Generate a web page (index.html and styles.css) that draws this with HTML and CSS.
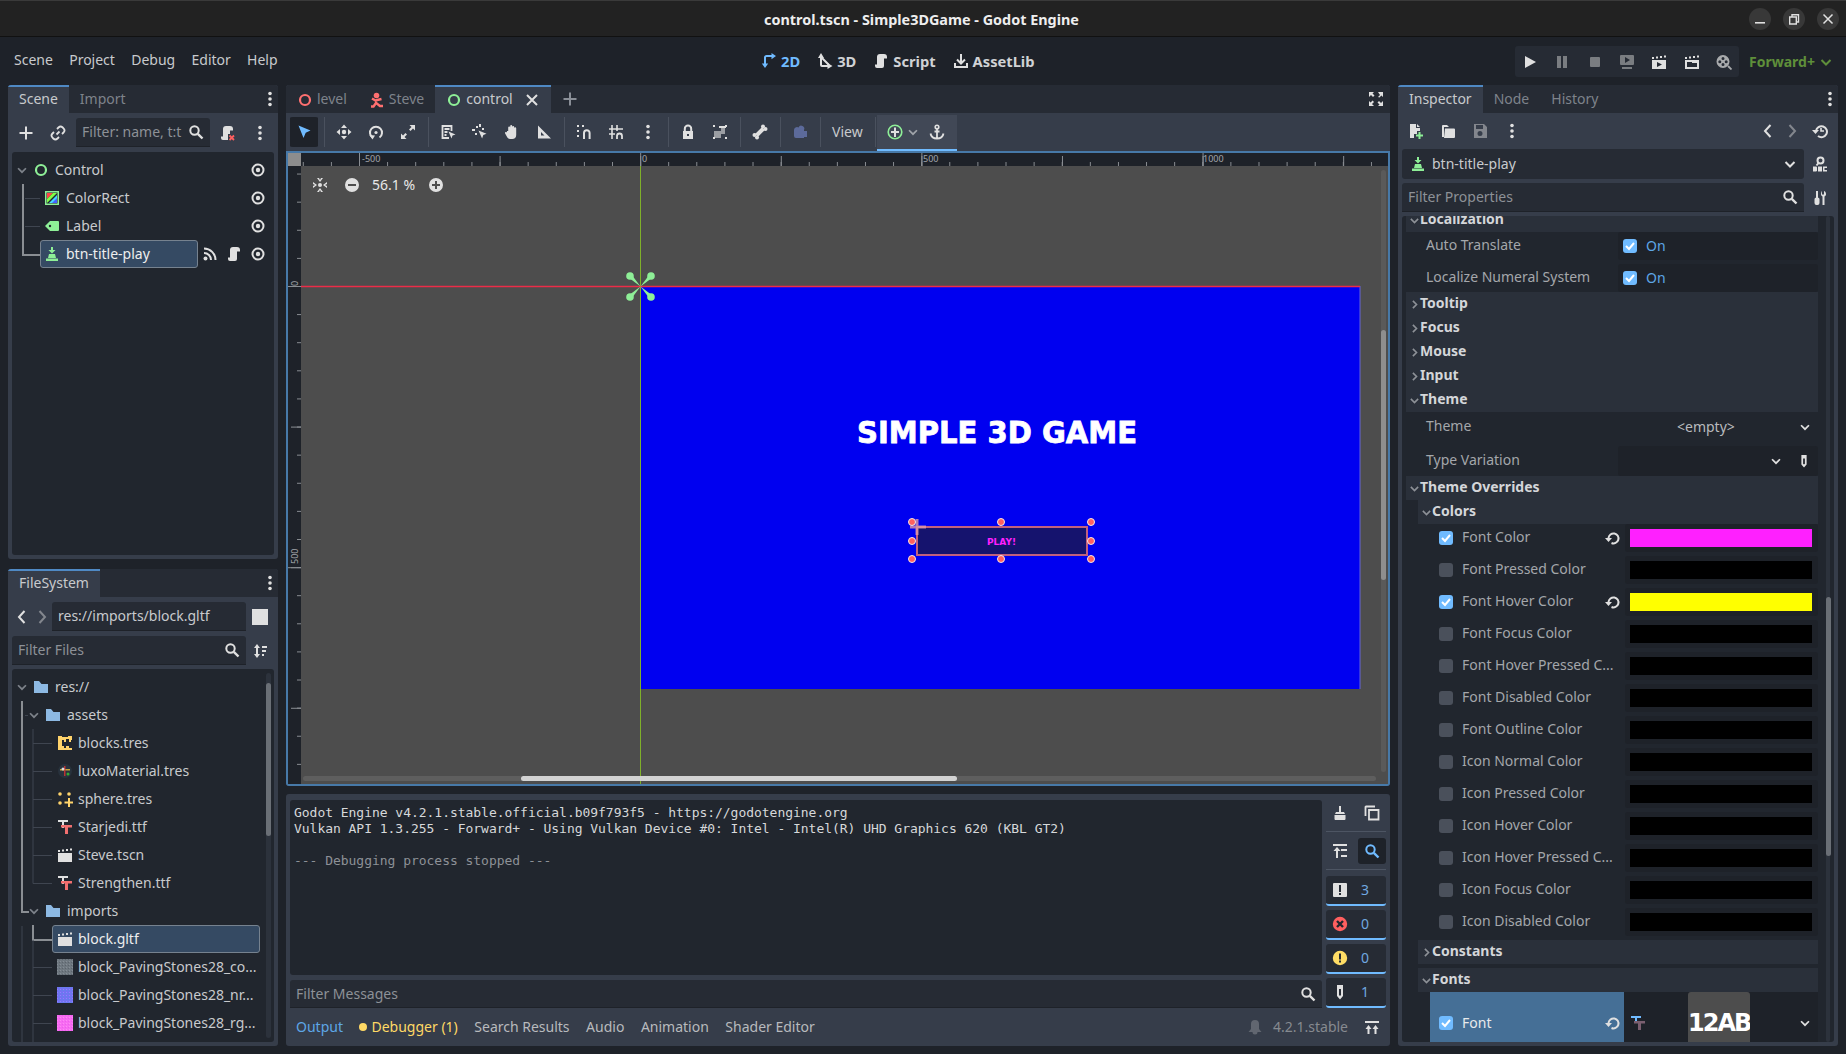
FILE: index.html
```html
<!DOCTYPE html>
<html>
<head>
  <title>control.tscn - Simple3DGame - Godot Engine</title>
  <link rel="stylesheet" href="styles.css">
</head>
<body>
  <!-- icon sheet -->
  <svg class="sheet" xmlns="http://www.w3.org/2000/svg">
    <symbol id="i-ring" viewBox="0 0 16 16"><circle cx="8" cy="8" r="5" fill="none" stroke="currentColor" stroke-width="2.2"/></symbol>
    <symbol id="i-plus" viewBox="0 0 16 16"><path fill="currentColor" d="M7 1.500h2V7h5.500v2H9v5.500H7V9H1.500V7H7z"/></symbol>
    <symbol id="i-x" viewBox="0 0 16 16"><path stroke="currentColor" stroke-width="2" d="M3 3l10 10M13 3L3 13"/></symbol>
    <symbol id="i-link" viewBox="0 0 16 16"><path fill="none" stroke="currentColor" stroke-width="1.800" d="M6.500 9.500l3-3M7 4l1.500-1.500a3 3 0 0 1 4.200 0l.8.800a3 3 0 0 1 0 4.200L12 9M9 12l-1.500 1.500a3 3 0 0 1-4.200 0l-.8-.8a3 3 0 0 1 0-4.200L4 7"/></symbol>
    <symbol id="i-search" viewBox="0 0 16 16"><circle cx="6.500" cy="6.500" r="4.200" fill="none" stroke="currentColor" stroke-width="2"/><path stroke="currentColor" stroke-width="2.400" d="M9.800 9.800l4.700 4.700"/></symbol>
    <symbol id="i-dots" viewBox="0 0 16 16"><circle cx="8" cy="2.500" r="1.800" fill="currentColor"/><circle cx="8" cy="8" r="1.800" fill="currentColor"/><circle cx="8" cy="13.500" r="1.800" fill="currentColor"/></symbol>
    <symbol id="i-chev" viewBox="0 0 16 16"><path fill="none" stroke="currentColor" stroke-width="2" d="M3.500 6L8 10.500 12.500 6"/></symbol>
    <symbol id="i-chev-r" viewBox="0 0 16 16"><path fill="none" stroke="currentColor" stroke-width="2" d="M6 3.500L10.500 8 6 12.500"/></symbol>
    <symbol id="i-left" viewBox="0 0 16 16"><path fill="none" stroke="currentColor" stroke-width="2" d="M10.500 2L5 8l5.500 6"/></symbol>
    <symbol id="i-right" viewBox="0 0 16 16"><path fill="none" stroke="currentColor" stroke-width="2" d="M5.500 2L11 8l-5.500 6"/></symbol>
    <symbol id="i-eye" viewBox="0 0 16 16"><circle cx="8" cy="8" r="5.500" fill="none" stroke="currentColor" stroke-width="2"/><circle cx="8" cy="8" r="2.200" fill="currentColor"/></symbol>
    <symbol id="i-signal" viewBox="0 0 16 16"><circle cx="3.500" cy="12.500" r="2" fill="currentColor"/><path fill="none" stroke="currentColor" stroke-width="2" d="M2 7a7 7 0 0 1 7 7M2 2.500A11.500 11.500 0 0 1 13.500 14"/></symbol>
    <symbol id="i-script" viewBox="0 0 16 16"><path fill="currentColor" d="M7 1a3 3 0 0 0-3 3v7.500H2V13a2 2 0 0 0 2 2h5a2 2 0 0 0 2-2V5.500h3V4a3 3 0 0 0-3-3z"/></symbol>
    <symbol id="i-script-x" viewBox="0 0 16 16"><path fill="currentColor" d="M6 1a3 3 0 0 0-3 3v7.500H1V13a2 2 0 0 0 2 2h5V9h2V5.500h3V4a3 3 0 0 0-3-3z"/><path stroke="#ff5f5f" stroke-width="1.800" d="M9.500 10.500l4.500 4.500M14 10.500L9.500 15"/></symbol>
    <symbol id="i-colorrect" viewBox="0 0 16 16"><path fill="#ff4545" d="M3 3h6L3 9z"/><path fill="#80ff45" d="M3 9l6-6h4L3 13z"/><path fill="#45d7ff" d="M13 5v4l-4 4H5z"/><path fill="#4560ff" d="M13 8v5H8z"/><rect x="1.750" y="1.750" width="12.500" height="12.500" fill="none" stroke="#8eef97" stroke-width="1.500"/></symbol>
    <symbol id="i-label" viewBox="0 0 16 16"><path fill="#8eef97" d="M6 3h8a1 1 0 0 1 1 1v8a1 1 0 0 1-1 1H6l-5-5z"/><circle cx="6" cy="8" r="1.200" fill="#21262e"/></symbol>
    <symbol id="i-button" viewBox="0 0 16 16"><path fill="#8eef97" d="M7 1h2v3h2.500L8 7.500 4.500 4H7zM5 8h6l1 4H4zM2 12.500h12V15H2z"/></symbol>
    <symbol id="i-select" viewBox="0 0 16 16"><path fill="currentColor" d="M2.500 1.500l12 5-4.800 2.200-2.200 5.300z"/></symbol>
    <symbol id="i-move" viewBox="0 0 16 16"><circle cx="8" cy="8" r="2.200" fill="currentColor"/><path fill="currentColor" d="M8 .5l3 3.500H5zM8 15.500L5 12h6zM.5 8L4 5v6zM15.500 8L12 11V5z"/></symbol>
    <symbol id="i-rotate" viewBox="0 0 16 16"><path fill="none" stroke="currentColor" stroke-width="2" d="M4.500 13.500a6 6 0 1 1 7 0"/><path fill="currentColor" d="M1.500 11l5.500.5-2.500 4z"/><circle cx="8" cy="8.500" r="1.600" fill="currentColor"/></symbol>
    <symbol id="i-scale" viewBox="0 0 16 16"><path fill="currentColor" d="M9.500 1H15v5.500l-2-2-2.500 2.500-1.500-1.500L11.500 3zM6.500 15H1V9.500l2 2L5.500 9 7 10.500 4.500 13z"/></symbol>
    <symbol id="i-list" viewBox="0 0 16 16"><path fill="none" stroke="currentColor" stroke-width="1.800" d="M9 14H2.500V2h9v5M4.500 5h5M4.500 8h3M4.500 11h2"/><path fill="currentColor" d="M8.500 7.500l7 3-3 1-1 3z"/></symbol>
    <symbol id="i-smart" viewBox="0 0 16 16"><path fill="currentColor" d="M7 0h2v3H7zM0 5h3v2H0zM10 4h2v2h-2zM3 9h2v2H3zM4 2h2v2H4z"/><path fill="currentColor" d="M6.500 6.500l8 3.200-3.200 1.200-1.200 3.600z"/></symbol>
    <symbol id="i-hand" viewBox="0 0 16 16"><path fill="currentColor" d="M3 7h1.200V3.500a1 1 0 0 1 2 0V2a1 1 0 0 1 2 0v1a1 1 0 0 1 2 0v1.200a1 1 0 0 1 2 0V11c0 2.500-1.500 4-4 4H6c-1.500 0-2.500-1-3.200-2.500L1 9.200c-.4-1.200 1-1.800 1.800-.8z"/></symbol>
    <symbol id="i-ruler" viewBox="0 0 16 16"><path fill="currentColor" fill-rule="evenodd" d="M2 1.500l13 13H2zM5 8v3.500h3.500z"/></symbol>
    <symbol id="i-snap" viewBox="0 0 16 16"><path fill="none" stroke="currentColor" stroke-width="2" d="M8 15V9a2.800 2.800 0 0 1 5.600 0v6"/><path fill="currentColor" d="M1 1h2v2H1zM6 1h2v2H6zM1 6h2v2H1zM1 11h2v2H1z"/></symbol>
    <symbol id="i-grid" viewBox="0 0 16 16"><path fill="none" stroke="currentColor" stroke-width="1.600" d="M4 1v14M9 1v6M1 5h14M1 10h6"/><path fill="none" stroke="currentColor" stroke-width="1.800" d="M9 15v-3a2.500 2.500 0 0 1 5 0v3"/></symbol>
    <symbol id="i-lock" viewBox="0 0 16 16"><path fill="none" stroke="currentColor" stroke-width="2" d="M4.800 8V4.800a3.200 3.200 0 0 1 6.400 0V8"/><path fill="currentColor" fill-rule="evenodd" d="M3 7h10v8H3zm4 3v2h2v-2z"/></symbol>
    <symbol id="i-group" viewBox="0 0 16 16"><path fill="currentColor" d="M7 2h7v2H7zM1 1h2v2H1zM13 1h2v2h-2zM1 13h2v2H1zM13 13h2v2h-2z"/><path fill="currentColor" opacity=".6" d="M2 7h7v7H2zM9 4h4v6H9z"/></symbol>
    <symbol id="i-bone" viewBox="0 0 16 16"><path fill="none" stroke="currentColor" stroke-width="4" d="M4.500 11.500l7-7"/><circle cx="11" cy="2.500" r="2" fill="currentColor"/><circle cx="13.500" cy="5" r="2" fill="currentColor"/><circle cx="2.500" cy="11" r="2" fill="currentColor"/><circle cx="5" cy="13.500" r="2" fill="currentColor"/></symbol>
    <symbol id="i-camera" viewBox="0 0 16 16"><path fill="currentColor" d="M2 6a3 3 0 0 1 4.500-2.500A3 3 0 0 1 12 6v1h3v6h-3v1H4a2 2 0 0 1-2-2z"/></symbol>
    <symbol id="i-ringplus" viewBox="0 0 16 16"><circle cx="8" cy="8" r="6.800" fill="none" stroke="#8eef97" stroke-width="1.600"/><path fill="#e0e0e0" d="M7 3.500h2V7h3v2H9v4H7V9H4V7h3z"/></symbol>
    <symbol id="i-anchor" viewBox="0 0 16 16"><circle cx="8" cy="3" r="1.800" fill="none" stroke="currentColor" stroke-width="1.600"/><path fill="none" stroke="currentColor" stroke-width="1.800" d="M8 5v9.500M5.500 7.500h5M1.500 9.500c.5 3 3 5 6.500 5s6-2 6.500-5"/></symbol>
    <symbol id="i-full" viewBox="0 0 16 16"><path fill="currentColor" d="M1 1h5L4.500 2.600 6.500 4.600 5 6 3 4 1 6zM15 1v5l-1.600-1.500-2 2L10 6l2-2-2-3zM1 15v-5l1.600 1.500 2-2L6 11l-2 2 2 2zM15 15h-5l1.500-1.600-2-2L11 10l2 2 2-2z"/></symbol>
    <symbol id="i-center" viewBox="0 0 16 16"><circle cx="8" cy="8" r="2" fill="currentColor"/><path fill="currentColor" d="M5 1h2l1 2 1-2h2L8 5zM5 15h2l1-2 1 2h2L8 11zM1 5v2l2 1-2 1v2l4-3zM15 5v2l-2 1 2 1v2l-4-3z"/></symbol>
    <symbol id="i-zoomout" viewBox="0 0 16 16"><path fill="currentColor" fill-rule="evenodd" d="M8 1a7 7 0 1 1 0 14A7 7 0 0 1 8 1zM4 7v2h8V7z"/></symbol>
    <symbol id="i-zoomin" viewBox="0 0 16 16"><path fill="currentColor" fill-rule="evenodd" d="M8 1a7 7 0 1 1 0 14A7 7 0 0 1 8 1zM7 4v3H4v2h3v3h2V9h3V7H9V4z"/></symbol>
    <symbol id="i-2d" viewBox="0 0 16 16"><path fill="none" stroke="currentColor" stroke-width="2" d="M4 11V4.500A1.500 1.500 0 0 1 5.500 3H11"/><path fill="currentColor" d="M.8 10.500h6.400L4 15zM10.500 0v6.200L15 3z"/></symbol>
    <symbol id="i-3d" viewBox="0 0 16 16"><path fill="none" stroke="currentColor" stroke-width="2" d="M4 4v8a1 1 0 0 0 1 1h6M5 5l7 7"/><path fill="currentColor" d="M4 0l3 5H1zM15.500 13L10.500 16v-6z"/></symbol>
    <symbol id="i-lib" viewBox="0 0 16 16"><path fill="none" stroke="currentColor" stroke-width="2" d="M8 1v9M4 6.500l4 4 4-4M2 10v4h12v-4"/></symbol>
    <symbol id="i-play" viewBox="0 0 16 16"><path fill="currentColor" d="M3 2l11 6-11 6z"/></symbol>
    <symbol id="i-pause" viewBox="0 0 16 16"><path fill="currentColor" d="M3 2h4v12H3zM9 2h4v12H9z"/></symbol>
    <symbol id="i-stop" viewBox="0 0 16 16"><rect x="3" y="3" width="10" height="10" rx="1" fill="currentColor"/></symbol>
    <symbol id="i-remote" viewBox="0 0 16 16"><path fill="currentColor" fill-rule="evenodd" d="M2 1h12a1 1 0 0 1 1 1v8a1 1 0 0 1-1 1H2a1 1 0 0 1-1-1V2a1 1 0 0 1 1-1zm4 2v6l5-3zM3 13h10v2H3z"/></symbol>
    <symbol id="i-clapplay" viewBox="0 0 16 16"><path fill="currentColor" fill-rule="evenodd" d="M1 6h14v9H1zm5 2v5l5-2.500z"/><path fill="currentColor" d="M1 3h2v2H1zM5 2.500h2v2H5zM9 2h2v2H9zM13 1.500h2v2h-2z"/></symbol>
    <symbol id="i-clapfolder" viewBox="0 0 16 16"><path fill="currentColor" fill-rule="evenodd" d="M1 6h14v9H1zm2 3v4h10V9H8V8H3z"/><path fill="currentColor" d="M1 3h2v2H1zM5 2.500h2v2H5zM9 2h2v2H9zM13 1.500h2v2h-2z"/></symbol>
    <symbol id="i-reel" viewBox="0 0 16 16"><path fill="currentColor" fill-rule="evenodd" d="M7 1a6.500 6.500 0 1 1 0 13A6.500 6.500 0 0 1 7 1zM7 3a1.500 1.500 0 1 0 0 3 1.500 1.500 0 0 0 0-3zM3.800 6.200a1.500 1.500 0 1 0 0 3 1.500 1.500 0 0 0 0-3zM10.200 6.200a1.500 1.500 0 1 0 0 3 1.500 1.500 0 0 0 0-3zM7 9a1.500 1.500 0 1 0 0 3 1.500 1.500 0 0 0 0-3z"/><path stroke="currentColor" stroke-width="1.800" d="M12 12l3.500 3.500"/></symbol>
    <symbol id="i-docnew" viewBox="0 0 16 16"><path fill="currentColor" d="M2 1h6v4h4v3H9v3H6v4H2zM9 1l3 3H9z"/><path fill="#8eef97" d="M10.500 9h2v2.500H15v2h-2.500V16h-2v-2.500H8v-2h2.500z"/></symbol>
    <symbol id="i-open" viewBox="0 0 16 16"><path fill="currentColor" d="M2 3a1 1 0 0 1 1-1h4l2 2h-5v10H2zM5 5.500h9a1 1 0 0 1 1 1V14a1 1 0 0 1-1 1H4z"/></symbol>
    <symbol id="i-save" viewBox="0 0 16 16"><path fill="currentColor" fill-rule="evenodd" d="M2 1h10l3 3v11H2zm2 1v4h7V2zm4 6a2.500 2.500 0 1 0 0 5 2.500 2.500 0 0 0 0-5z"/></symbol>
    <symbol id="i-history" viewBox="0 0 16 16"><path fill="none" stroke="currentColor" stroke-width="2" d="M4 8a5.500 5.500 0 1 1 2 5"/><path fill="currentColor" d="M0 7h7l-3.500 4z"/><path fill="none" stroke="currentColor" stroke-width="1.600" d="M9 5v3h3"/></symbol>
    <symbol id="i-doc" viewBox="0 0 16 16"><circle cx="8.500" cy="4.500" r="3" fill="none" stroke="currentColor" stroke-width="2"/><path stroke="currentColor" stroke-width="2" d="M6.500 7L4.500 9.500"/><path fill="currentColor" d="M1 10.500h3.500l.5 1V15l-1 .5H1zM6 10.500h4v5H6zM11 10.500h4v1.500h-2.500v2H15v1.500h-4z"/></symbol>
    <symbol id="i-tools" viewBox="0 0 16 16"><path fill="currentColor" d="M4 1h2v6.500c1 .5 1.500 1 1.500 2V13a2 2 0 0 1-2 2h-1a2 2 0 0 1-2-2V9.500c0-1 .5-1.500 1.500-2zM10 1v3l1 1 1-1V1c1.500.5 2 2 2 3.200 0 1-.5 1.800-1.500 2.300V15h-2V6.500C9.500 6 9 5.200 9 4.200 9 3 9.500 1.500 10 1z"/></symbol>
    <symbol id="i-sort" viewBox="0 0 16 16"><path fill="currentColor" d="M5 1l3 4H6v6h2l-3 4-3-4h2V5H2zM10 3h5v2h-5zM10 7h4v2h-4zM10 11h2v2h-2z"/></symbol>
    <symbol id="i-folder" viewBox="0 0 16 16"><path fill="currentColor" d="M1 2h5l2.500 3H15v9H1z"/></symbol>
    <symbol id="i-clap" viewBox="0 0 16 16"><path fill="currentColor" d="M1 6h14v9H1zM1 3h2v2H1zM5 2.500h2v2H5zM9 2h2v2H9zM13 1.500h2v2h-2z"/></symbol>
    <symbol id="i-font" viewBox="0 0 16 16"><path fill="#e0e0e0" d="M1 1h10v2H7v6H5V3H1z"/><path fill="#f26f6f" d="M4 6h11v2.500h-4V15H8V8.500H4z"/></symbol>
    <symbol id="i-fontdim" viewBox="0 0 16 16"><path fill="#70bbff" d="M1 1h10v2H7v5H5V3H1z"/><path fill="#7a5f70" d="M4 6h11v2.500h-4V15H8V8.500H4z"/></symbol>
    <symbol id="i-blocks" viewBox="0 0 16 16"><path fill="#ffd36b" fill-rule="evenodd" d="M1 1h4v1h6V1h4v4h-1v2h-2V4H9v3H7V5H5v6h2v2h2v-2h3v2h3v2H1z"/></symbol>
    <symbol id="i-sphere" viewBox="0 0 16 16"><circle cx="8" cy="8" r="7" fill="#28323d"/><path fill="#c7a23a" d="M3 6h10v1.500H3z"/><path fill="#b33" d="M7 3h1.500v10H7z"/><circle cx="6" cy="6" r="1.500" fill="#ddd"/><circle cx="11" cy="11" r="1.500" fill="#3a3"/></symbol>
    <symbol id="i-pack" viewBox="0 0 16 16"><circle cx="3" cy="3" r="1.800" fill="#ffd36b"/><circle cx="12" cy="3" r="1.800" fill="#ffd36b"/><circle cx="3" cy="12" r="1.800" fill="#ffd36b"/><path fill="#ffd36b" d="M11 7h2v3.500h3v2h-3V16h-2v-3.500H7.500v-2H11z"/></symbol>
    <symbol id="i-revert" viewBox="0 0 16 16"><path fill="none" stroke="currentColor" stroke-width="2" d="M3.500 8a5 5 0 1 1 3 5"/><path fill="currentColor" d="M0 8h7l-3.500 4z"/></symbol>
    <symbol id="i-pin" viewBox="0 0 16 16"><path fill="currentColor" fill-rule="evenodd" d="M5 1h6v11l-3 3.500L5 12zm2 4v6l1 1 1-1V5z"/></symbol>
    <symbol id="i-broom" viewBox="0 0 16 16"><path fill="currentColor" d="M7 1h2v6h3l1 2H3l1-2h3zM2.500 10h11V14a1 1 0 0 1-1 1h-9a1 1 0 0 1-1-1z"/></symbol>
    <symbol id="i-copy" viewBox="0 0 16 16"><path fill="none" stroke="currentColor" stroke-width="1.800" d="M1.500 11V2a.5.5 0 0 1 .5-.5h9M5 5h9.500v9.500H5z"/></symbol>
    <symbol id="i-filterlines" viewBox="0 0 16 16"><path fill="currentColor" d="M1 1h14v2H1zM5 4l3.500 4H6v7H4V8H1.500zM9 6h6v2H9zM9 12h6v2H9z"/></symbol>
    <symbol id="i-msg" viewBox="0 0 16 16"><path fill="currentColor" fill-rule="evenodd" d="M2 1h12a1 1 0 0 1 1 1v12a1 1 0 0 1-1 1H2a1 1 0 0 1-1-1V2a1 1 0 0 1 1-1zm5 2v7h2V3zm0 8v2h2v-2z"/></symbol>
    <symbol id="i-err" viewBox="0 0 16 16"><circle cx="8" cy="8" r="7.200" fill="#ff5f5f"/><path stroke="#21262e" stroke-width="2.400" d="M5 5l6 6M11 5l-6 6"/></symbol>
    <symbol id="i-warn" viewBox="0 0 16 16"><path fill="#ffdd65" fill-rule="evenodd" d="M8 .8a7.200 7.200 0 1 1 0 14.400A7.200 7.200 0 0 1 8 .8zM7 3.500V9.500h2V3.500zM7 10.500v2h2v-2z"/></symbol>
    <symbol id="i-bell" viewBox="0 0 16 16"><path fill="currentColor" d="M8 1a4 4 0 0 1 4 4v5l2.500 3h-4a2.500 2.500 0 0 1-5 0h-4L4 10V5a4 4 0 0 1 4-4z"/></symbol>
    <symbol id="i-expand" viewBox="0 0 16 16"><path fill="currentColor" d="M1 2h14v2H1zM4.500 6l3 4H5.500v5h-2v-5H1.500zM11.500 6l3 4h-2v5h-2v-5h-2z"/></symbol>
    <symbol id="i-steve" viewBox="0 0 16 16"><circle cx="7.500" cy="3.500" r="2.800" fill="currentColor"/><path fill="none" stroke="currentColor" stroke-width="2.400" d="M3 6.500l3.500 2 6-1.500M7 8v3l4 3h3M7 11l-2.500 3.500H2"/></symbol>
    <symbol id="i-min" viewBox="0 0 16 16"><path fill="currentColor" d="M3 11h10v1.600H3z"/></symbol>
    <symbol id="i-restore" viewBox="0 0 16 16"><path fill="none" stroke="currentColor" stroke-width="1.400" d="M3.700 6h6.600v7H3.700zM6 6V3.700h6.500V11h-2"/></symbol>
    <symbol id="i-winx" viewBox="0 0 16 16"><path stroke="currentColor" stroke-width="1.500" d="M3.500 3.500l9 9M12.500 3.500l-9 9"/></symbol>
  </svg>

  <header class="titlebar">
    <span class="title-text">control.tscn - Simple3DGame - Godot Engine</span>
    <div class="win-btns">
      <span class="win-btn"><svg class="ic"><use href="#i-min"/></svg></span>
      <span class="win-btn"><svg class="ic"><use href="#i-restore"/></svg></span>
      <span class="win-btn"><svg class="ic"><use href="#i-winx"/></svg></span>
    </div>
  </header>

  <div class="menubar">
    <nav class="menus">
      <span>Scene</span><span>Project</span><span>Debug</span><span>Editor</span><span>Help</span>
    </nav>
    <div class="modes">
      <span class="mode mode-on"><svg class="ic"><use href="#i-2d"/></svg>2D</span>
      <span class="mode"><svg class="ic"><use href="#i-3d"/></svg>3D</span>
      <span class="mode"><svg class="ic"><use href="#i-script"/></svg>Script</span>
      <span class="mode"><svg class="ic"><use href="#i-lib"/></svg>AssetLib</span>
    </div>
    <div class="playbar">
      <svg class="ic"><use href="#i-play"/></svg>
      <svg class="ic dim"><use href="#i-pause"/></svg>
      <svg class="ic dim"><use href="#i-stop"/></svg>
      <svg class="ic dim"><use href="#i-remote"/></svg>
      <svg class="ic"><use href="#i-clapplay"/></svg>
      <svg class="ic"><use href="#i-clapfolder"/></svg>
      <svg class="ic dim2"><use href="#i-reel"/></svg>
    </div>
    <span class="renderer">Forward+<svg class="ic"><use href="#i-chev"/></svg></span>
  </div>

  <main class="main">
    <!-- left docks -->
    <section class="dock-left">
      <div class="panel scene-dock">
        <div class="tabs">
          <span class="tab tab-on">Scene</span>
          <span class="tab">Import</span>
          <svg class="ic tab-menu"><use href="#i-dots"/></svg>
        </div>
        <div class="scene-tools">
          <span class="btn"><svg class="ic"><use href="#i-plus"/></svg></span>
          <span class="btn"><svg class="ic"><use href="#i-link"/></svg></span>
          <div class="input scene-filter"><span>Filter: name, t:t</span><svg class="ic"><use href="#i-search"/></svg></div>
          <span class="btn"><svg class="ic"><use href="#i-script-x"/></svg></span>
          <span class="btn"><svg class="ic"><use href="#i-dots"/></svg></span>
        </div>
        <div class="tree scene-tree">
          <svg class="tree-lines">
            <path class="line-on" d="M11 32V103H28"/>
            <path class="line-off" d="M13 46.500H28M13 74.500H28"/>
          </svg>
          <div class="row lv0">
            <svg class="ic arrow"><use href="#i-chev"/></svg>
            <svg class="ic green"><use href="#i-ring"/></svg><span>Control</span>
            <div class="row-end"><svg class="ic"><use href="#i-eye"/></svg></div>
          </div>
          <div class="row lv1">
            <svg class="ic"><use href="#i-colorrect"/></svg><span>ColorRect</span>
            <div class="row-end"><svg class="ic"><use href="#i-eye"/></svg></div>
          </div>
          <div class="row lv1">
            <svg class="ic"><use href="#i-label"/></svg><span>Label</span>
            <div class="row-end"><svg class="ic"><use href="#i-eye"/></svg></div>
          </div>
          <div class="row lv1-sel">
            <div class="selected"><svg class="ic"><use href="#i-button"/></svg><span>btn-title-play</span></div>
            <div class="row-end">
              <svg class="ic"><use href="#i-signal"/></svg>
              <svg class="ic"><use href="#i-script"/></svg>
              <svg class="ic"><use href="#i-eye"/></svg>
            </div>
          </div>
        </div>
      </div>

      <div class="panel fs-dock">
        <div class="tabs">
          <span class="tab tab-on fs-tab">FileSystem</span>
          <svg class="ic tab-menu"><use href="#i-dots"/></svg>
        </div>
        <div class="fs-path">
          <svg class="ic"><use href="#i-left"/></svg>
          <svg class="ic dim"><use href="#i-right"/></svg>
          <div class="input fs-input"><span class="bright">res://imports/block.gltf</span></div>
          <span class="white-box"></span>
        </div>
        <div class="fs-filter">
          <div class="input fs-input-wide"><span>Filter Files</span><svg class="ic"><use href="#i-search"/></svg></div>
          <svg class="ic"><use href="#i-sort"/></svg>
        </div>
        <div class="tree fs-tree">
          <svg class="tree-lines">
            <path class="line-on" d="M10 32V243H17M21 256V271H40"/>
            <path class="line-off" d="M10 257V373M21 60V214.500M21 74.500H40M21 102.500H40M21 130.500H40M21 158.500H40M21 186.500H40M21 214.500H40M21 271V373M21 298.500H40M21 326.500H40M21 354.500H40M13 46.500H16"/>
          </svg>
          <div class="row lv0"><svg class="ic arrow"><use href="#i-chev"/></svg><svg class="ic folder"><use href="#i-folder"/></svg><span>res://</span></div>
          <div class="row fs1"><svg class="ic arrow"><use href="#i-chev"/></svg><svg class="ic folder"><use href="#i-folder"/></svg><span>assets</span></div>
          <div class="row fs2"><svg class="ic"><use href="#i-blocks"/></svg><span>blocks.tres</span></div>
          <div class="row fs2"><svg class="ic"><use href="#i-sphere"/></svg><span>luxoMaterial.tres</span></div>
          <div class="row fs2"><svg class="ic"><use href="#i-pack"/></svg><span>sphere.tres</span></div>
          <div class="row fs2"><svg class="ic"><use href="#i-font"/></svg><span>Starjedi.ttf</span></div>
          <div class="row fs2"><svg class="ic"><use href="#i-clap"/></svg><span>Steve.tscn</span></div>
          <div class="row fs2"><svg class="ic"><use href="#i-font"/></svg><span>Strengthen.ttf</span></div>
          <div class="row fs1"><svg class="ic arrow"><use href="#i-chev"/></svg><svg class="ic folder"><use href="#i-folder"/></svg><span>imports</span></div>
          <div class="row fs2-sel"><div class="selected"><svg class="ic"><use href="#i-clap"/></svg><span>block.gltf</span></div></div>
          <div class="row fs2"><span class="tex tex-co"></span><span>block_PavingStones28_co...</span></div>
          <div class="row fs2"><span class="tex tex-nr"></span><span>block_PavingStones28_nr...</span></div>
          <div class="row fs2"><span class="tex tex-rg"></span><span>block_PavingStones28_rg...</span></div>
          <span class="fs-scroll"></span>
        </div>
      </div>
    </section>

    <!-- center -->
    <section class="center">
      <div class="panel view-panel">
        <div class="tabs">
          <span class="tab scene-tab"><svg class="ic red"><use href="#i-ring"/></svg>level</span>
          <span class="tab scene-tab"><svg class="ic red"><use href="#i-steve"/></svg>Steve</span>
          <span class="tab tab-on scene-tab"><svg class="ic green"><use href="#i-ring"/></svg>control<svg class="ic tab-x"><use href="#i-x"/></svg></span>
          <svg class="ic tab-add"><use href="#i-plus"/></svg>
          <svg class="ic tab-menu"><use href="#i-full"/></svg>
        </div>
        <div class="toolbar">
          <span class="tb on"><svg class="ic blue"><use href="#i-select"/></svg></span><i class="sep"></i>
          <span class="tb"><svg class="ic"><use href="#i-move"/></svg></span>
          <span class="tb"><svg class="ic"><use href="#i-rotate"/></svg></span>
          <span class="tb"><svg class="ic"><use href="#i-scale"/></svg></span><i class="sep"></i>
          <span class="tb"><svg class="ic"><use href="#i-list"/></svg></span>
          <span class="tb"><svg class="ic"><use href="#i-smart"/></svg></span>
          <span class="tb"><svg class="ic"><use href="#i-hand"/></svg></span>
          <span class="tb"><svg class="ic"><use href="#i-ruler"/></svg></span><i class="sep"></i>
          <span class="tb"><svg class="ic"><use href="#i-snap"/></svg></span>
          <span class="tb"><svg class="ic"><use href="#i-grid"/></svg></span>
          <span class="tb"><svg class="ic"><use href="#i-dots"/></svg></span><i class="sep"></i>
          <span class="tb"><svg class="ic"><use href="#i-lock"/></svg></span>
          <span class="tb"><svg class="ic"><use href="#i-group"/></svg></span><i class="sep"></i>
          <span class="tb"><svg class="ic"><use href="#i-bone"/></svg></span><i class="sep"></i>
          <span class="tb"><svg class="ic cam"><use href="#i-camera"/></svg></span><i class="sep"></i>
          <span class="tb-view">View</span><i class="sep"></i>
          <div class="tb-group">
            <svg class="ic"><use href="#i-ringplus"/></svg>
            <svg class="ic small"><use href="#i-chev"/></svg>
            <svg class="ic"><use href="#i-anchor"/></svg>
          </div>
        </div>
        <div class="viewport">
          <span class="ruler-corner"></span>
          <div class="ruler-top">
            <span class="rlabel rl-a">-500</span><span class="rlabel rl-b">0</span><span class="rlabel rl-c">500</span><span class="rlabel rl-d">1000</span>
          </div>
          <div class="ruler-left">
            <span class="rlabel rv rv-a">0</span><span class="rlabel rv rv-b">500</span>
          </div>
          <div class="canvas">
            <svg class="canvas-art" viewBox="0 0 1087 618">
              <rect x="339" y="120" width="720" height="403" fill="#0000f0"/>
              <path d="M1059 120v403" stroke="#6666d8" stroke-width="1"/>
              <path d="M339.500 0V618" stroke="#7fb02a" stroke-width="1"/>
              <path d="M0 120.500H1059" stroke="#ec2c48" stroke-width="1.500"/>
              <text class="game-title" x="556" y="277" textLength="280" lengthAdjust="spacingAndGlyphs">SIMPLE 3D GAME</text>
              <rect x="616" y="361" width="170" height="28" fill="#15136e" stroke="#c0607f" stroke-width="2"/>
              <text class="play-text" x="686" y="379" textLength="29" lengthAdjust="spacingAndGlyphs">PLAY!</text>
              <path d="M609 361h16M616 353v16" stroke="#e09aa8" stroke-width="3" opacity=".8"/>
              <g class="handles">
                <circle cx="611" cy="356" r="3.500"/><circle cx="700" cy="356" r="3.500"/><circle cx="790" cy="356" r="3.500"/>
                <circle cx="611" cy="375" r="3.500"/><circle cx="790" cy="375" r="3.500"/>
                <circle cx="611" cy="393" r="3.500"/><circle cx="700" cy="393" r="3.500"/><circle cx="790" cy="393" r="3.500"/>
              </g>
              <g class="origin">
                <path d="M339.500 120.500L327.500 111.500 330.500 108.500zM339.500 120.500L348.500 108.500 351.500 111.500zM339.500 120.500L327.500 129.500 330.500 132.500zM339.500 120.500L351.500 129.500 348.500 132.500z"/>
                <circle cx="329" cy="110" r="3.800"/><circle cx="350" cy="110" r="3.800"/><circle cx="329" cy="131" r="3.800"/><circle cx="350" cy="131" r="3.800"/>
              </g>
            </svg>
            <div class="zoom-ctl">
              <svg class="ic"><use href="#i-center"/></svg>
              <svg class="ic zoom-out"><use href="#i-zoomout"/></svg>
              <span>56.1 %</span>
              <svg class="ic"><use href="#i-zoomin"/></svg>
            </div>
            <span class="vscroll"></span>
            <span class="hscroll"></span>
          </div>
        </div>
      </div>

      <div class="panel bottom">
        <div class="bottom-main">
          <div class="log-col">
            <pre class="log">Godot Engine v4.2.1.stable.official.b09f793f5 - https://godotengine.org
Vulkan API 1.3.255 - Forward+ - Using Vulkan Device #0: Intel - Intel(R) UHD Graphics 620 (KBL GT2)

<span class="log-dim">--- Debugging process stopped ---</span></pre>
            <div class="input log-filter"><span>Filter Messages</span><svg class="ic"><use href="#i-search"/></svg></div>
          </div>
          <div class="side">
            <div class="side-row"><svg class="ic"><use href="#i-broom"/></svg><svg class="ic"><use href="#i-copy"/></svg></div>
            <i class="side-sep"></i>
            <div class="side-row"><svg class="ic"><use href="#i-filterlines"/></svg><span class="side-on"><svg class="ic blue"><use href="#i-search"/></svg></span></div>
            <i class="side-sep"></i>
            <div class="count"><svg class="ic"><use href="#i-msg"/></svg><span>3</span></div>
            <div class="count"><svg class="ic"><use href="#i-err"/></svg><span>0</span></div>
            <div class="count"><svg class="ic"><use href="#i-warn"/></svg><span>0</span></div>
            <div class="count"><svg class="ic"><use href="#i-pin"/></svg><span>1</span></div>
          </div>
        </div>
        <div class="bottom-tabs">
          <span class="btab btab-on">Output</span>
          <span class="btab btab-warn"><i class="dot"></i>Debugger (1)</span>
          <span class="btab">Search Results</span>
          <span class="btab">Audio</span>
          <span class="btab">Animation</span>
          <span class="btab">Shader Editor</span>
          <div class="version">
            <svg class="ic dim3"><use href="#i-bell"/></svg>
            <span>4.2.1.stable</span>
            <svg class="ic"><use href="#i-expand"/></svg>
          </div>
        </div>
      </div>
    </section>

    <!-- inspector -->
    <section class="panel dock-right">
      <div class="tabs">
        <span class="tab tab-on">Inspector</span>
        <span class="tab">Node</span>
        <span class="tab">History</span>
        <svg class="ic tab-menu"><use href="#i-dots"/></svg>
      </div>
      <div class="insp-tools">
        <span class="btn"><svg class="ic"><use href="#i-docnew"/></svg></span>
        <span class="btn"><svg class="ic"><use href="#i-open"/></svg></span>
        <span class="btn"><svg class="ic dim"><use href="#i-save"/></svg></span>
        <span class="btn"><svg class="ic"><use href="#i-dots"/></svg></span>
        <span class="btn-n push"><svg class="ic"><use href="#i-left"/></svg></span>
        <span class="btn-n"><svg class="ic dim"><use href="#i-right"/></svg></span>
        <span class="btn"><svg class="ic"><use href="#i-history"/></svg></span>
      </div>
      <div class="insp-line">
        <div class="input obj-select"><svg class="ic"><use href="#i-button"/></svg><span class="bright">btn-title-play</span><svg class="ic"><use href="#i-chev"/></svg></div>
        <span class="btn"><svg class="ic"><use href="#i-doc"/></svg></span>
      </div>
      <div class="insp-line insp-filter">
        <div class="input prop-filter"><span>Filter Properties</span><svg class="ic"><use href="#i-search"/></svg></div>
        <span class="btn"><svg class="ic"><use href="#i-tools"/></svg></span>
      </div>
      <div class="insp-tree">
        <div class="sec sec-first"><svg class="ic arrow-sm"><use href="#i-chev"/></svg>Localization</div>
        <div class="prop"><label>Auto Translate</label><div class="val"><span class="cb"><svg viewBox="0 0 14 14"><path d="M3 7l3 3 5-6"/></svg></span><span class="on-text">On</span></div></div>
        <div class="prop"><label>Localize Numeral System</label><div class="val"><span class="cb"><svg viewBox="0 0 14 14"><path d="M3 7l3 3 5-6"/></svg></span><span class="on-text">On</span></div></div>
        <div class="sec"><svg class="ic arrow-sm"><use href="#i-chev-r"/></svg>Tooltip</div>
        <div class="sec"><svg class="ic arrow-sm"><use href="#i-chev-r"/></svg>Focus</div>
        <div class="sec"><svg class="ic arrow-sm"><use href="#i-chev-r"/></svg>Mouse</div>
        <div class="sec"><svg class="ic arrow-sm"><use href="#i-chev-r"/></svg>Input</div>
        <div class="sec"><svg class="ic arrow-sm"><use href="#i-chev"/></svg>Theme</div>
        <div class="prop prop-theme"><label>Theme</label><div class="val val-plain"><span class="empty">&lt;empty&gt;</span><svg class="ic small"><use href="#i-chev"/></svg></div></div>
        <div class="prop prop-type"><label>Type Variation</label><div class="val val-type"><svg class="ic small"><use href="#i-chev"/></svg><svg class="ic small pin"><use href="#i-pin"/></svg></div></div>
        <div class="sec"><svg class="ic arrow-sm"><use href="#i-chev"/></svg>Theme Overrides</div>
        <div class="sec sub"><svg class="ic arrow-sm"><use href="#i-chev"/></svg>Colors</div>

        <div class="cprop"><span class="cb"><svg viewBox="0 0 14 14"><path d="M3 7l3 3 5-6"/></svg></span><label>Font Color</label><svg class="ic revert"><use href="#i-revert"/></svg><div class="cval"><i class="swatch magenta"></i></div></div>
        <div class="cprop"><span class="cb off"></span><label>Font Pressed Color</label><div class="cval"><i class="swatch"></i></div></div>
        <div class="cprop"><span class="cb"><svg viewBox="0 0 14 14"><path d="M3 7l3 3 5-6"/></svg></span><label>Font Hover Color</label><svg class="ic revert"><use href="#i-revert"/></svg><div class="cval"><i class="swatch yellow"></i></div></div>
        <div class="cprop"><span class="cb off"></span><label>Font Focus Color</label><div class="cval"><i class="swatch"></i></div></div>
        <div class="cprop"><span class="cb off"></span><label>Font Hover Pressed C...</label><div class="cval"><i class="swatch"></i></div></div>
        <div class="cprop"><span class="cb off"></span><label>Font Disabled Color</label><div class="cval"><i class="swatch"></i></div></div>
        <div class="cprop"><span class="cb off"></span><label>Font Outline Color</label><div class="cval"><i class="swatch"></i></div></div>
        <div class="cprop"><span class="cb off"></span><label>Icon Normal Color</label><div class="cval"><i class="swatch"></i></div></div>
        <div class="cprop"><span class="cb off"></span><label>Icon Pressed Color</label><div class="cval"><i class="swatch"></i></div></div>
        <div class="cprop"><span class="cb off"></span><label>Icon Hover Color</label><div class="cval"><i class="swatch"></i></div></div>
        <div class="cprop"><span class="cb off"></span><label>Icon Hover Pressed C...</label><div class="cval"><i class="swatch"></i></div></div>
        <div class="cprop"><span class="cb off"></span><label>Icon Focus Color</label><div class="cval"><i class="swatch"></i></div></div>
        <div class="cprop"><span class="cb off"></span><label>Icon Disabled Color</label><div class="cval"><i class="swatch"></i></div></div>

        <div class="sec sub sec-const"><svg class="ic arrow-sm"><use href="#i-chev-r"/></svg>Constants</div>
        <div class="sec sub"><svg class="ic arrow-sm"><use href="#i-chev"/></svg>Fonts</div>
        <div class="font-row">
          <div class="font-key"><span class="cb"><svg viewBox="0 0 14 14"><path d="M3 7l3 3 5-6"/></svg></span><label>Font</label><svg class="ic revert"><use href="#i-revert"/></svg></div>
          <div class="font-val">
            <svg class="ic"><use href="#i-fontdim"/></svg>
            <span class="preview">12AB</span>
            <svg class="ic small"><use href="#i-chev"/></svg>
          </div>
        </div>
        <span class="insp-scroll"><i></i></span>
      </div>
    </section>
  </main>
</body>
</html>
```

FILE: styles.css
```css
* {
  box-sizing: border-box;
}

html, body {
  margin: 0;
  height: 1054px;
  overflow: hidden;
}

body {
  background: #1e2229;
  color: #c8cacd;
  font-family: "Noto Sans", sans-serif;
  font-size: 14px;
  line-height: 18px;
}

.sheet {
  display: none;
}

.ic {
  width: 16px;
  height: 16px;
  flex: none;
  color: #e0e0e0;
}

.ic.small {
  width: 14px;
  height: 14px;
}

.dim { opacity: .45; }
.dim2 { opacity: .7; }
.dim3 { opacity: .25; }
.green { color: #8eef97; }
.red { color: #ff7070; }
.blue { color: #70bbff; }
.folder { color: #8db9e3; }

/* title bar */
.titlebar {
  height: 37px;
  background: #222222;
  border-top: 1px solid #3a3a3a;
  border-bottom: 1px solid #111;
  display: flex;
  align-items: center;
  justify-content: center;
  position: relative;
}

.title-text {
  color: #eeeeee;
  font-weight: 700;
  font-size: 14.400px;
  margin-left: -3px;
  margin-bottom: -2px;
}

.win-btns {
  position: absolute;
  right: 7px;
  top: 7px;
  display: flex;
  gap: 12px;
}

.win-btn {
  width: 22px;
  height: 22px;
  border-radius: 50%;
  background: #383838;
  display: flex;
  align-items: center;
  justify-content: center;
}

/* menu bar */
.menubar {
  height: 48px;
  display: flex;
  align-items: center;
  padding-top: 1px;
}

.menus {
  display: flex;
  gap: 16.300px;
  padding-left: 14px;
  width: 761px;
  flex: none;
  margin-top: -3px;
  color: #c8cacd;
}

.modes {
  display: flex;
  gap: 17px;
  font-weight: 700;
  font-size: 14.700px;
  color: #d0d2d5;
  margin-top: -2px;
}

.mode {
  display: flex;
  align-items: center;
  gap: 4px;
}

.mode-on, .mode-on .ic {
  color: #70bbff;
}

.playbar {
  margin-left: auto;
  width: 224px;
  height: 31px;
  border-radius: 3px;
  background: #262b34;
  display: flex;
  align-items: center;
  justify-content: space-between;
  padding: 0 7px;
}

.renderer {
  width: 107px;
  padding-left: 10px;
  display: flex;
  align-items: center;
  gap: 3px;
  font-weight: 700;
  color: #5f8f3a;
}

.renderer .ic {
  color: #5f8f3a;
}

/* main area */
.main {
  height: 961px;
  padding: 0 8px;
  display: flex;
  gap: 8px;
}

.panel {
  background: #363d4a;
  border-radius: 3px;
  overflow: hidden;
}

.dock-left {
  width: 270px;
  display: flex;
  flex-direction: column;
  gap: 10px;
}

.center {
  width: 1104px;
  display: flex;
  flex-direction: column;
  gap: 8px;
}

.dock-right {
  width: 440px;
  display: flex;
  flex-direction: column;
}

.tabs {
  height: 28px;
  flex: none;
  background: #262b34;
  display: flex;
  align-items: stretch;
  position: relative;
  color: #7e838b;
}

.tab {
  padding: 0 11px 3px;
  display: flex;
  align-items: center;
  border-top: 2px solid transparent;
}

.tab-on {
  background: #363d4a;
  border-top-color: #4f89c4;
  color: #c8cacd;
}

.tab-menu {
  position: absolute;
  right: 0;
  top: 6px;
}

.fs-tab {
  width: 92px;
}

.scene-tab {
  gap: 4px;
}

.scene-tab .ic {
  margin-bottom: -2px;
}

.tab-x {
  margin-left: 7px;
}

.tab-add {
  align-self: center;
  margin-left: 11px;
  color: #8a8f97;
}

.view-panel .tab-menu {
  right: 6px;
}

.btn {
  width: 32px;
  height: 32px;
  flex: none;
  display: flex;
  align-items: center;
  justify-content: center;
}

.btn-n {
  width: 24px;
  height: 32px;
  display: flex;
  align-items: center;
  justify-content: center;
}

.push {
  margin-left: auto;
}

.input {
  background: #262b34;
  border-bottom: 1px solid #1e2229;
  border-radius: 3px 3px 0 0;
  height: 29px;
  display: flex;
  align-items: center;
  color: #8d9197;
  padding: 0 6px;
  justify-content: space-between;
}

.bright {
  color: #c8cacd;
}

/* scene dock */
.scene-dock {
  flex: 1;
  display: flex;
  flex-direction: column;
}

.scene-tools {
  height: 39px;
  flex: none;
  display: flex;
  align-items: center;
  padding-left: 2px;
}

.scene-filter {
  width: 134px;
  margin: 0 2px;
  white-space: nowrap;
  overflow: hidden;
}

.tree {
  background: #21262e;
  border-radius: 3px;
  margin: 0 4px 4px;
  flex: 1;
  padding-top: 4px;
  position: relative;
  overflow: hidden;
}

.tree-lines {
  position: absolute;
  inset: 0;
  width: 100%;
  height: 100%;
  fill: none;
}

.line-on {
  stroke: #8a8e93;
  stroke-width: 2;
}

.line-off {
  stroke: #3f4550;
  stroke-width: 1;
}

.row {
  height: 28px;
  display: flex;
  align-items: center;
  gap: 6px;
  position: relative;
  white-space: nowrap;
}

.row .arrow {
  width: 14px;
  height: 14px;
  color: #7d828a;
  margin-right: -2px;
}

.lv0 { padding-left: 3px; }
.lv1 { padding-left: 32px; }
.lv1-sel { padding-left: 28px; gap: 4px; }
.fs1 { padding-left: 15px; }
.fs2 { padding-left: 45px; gap: 5px; }
.fs2-sel { padding-left: 40px; }

.row-end {
  margin-left: auto;
  padding-right: 8px;
  display: flex;
  gap: 8px;
}

.selected {
  height: 28px;
  flex: none;
  background: #354a63;
  border: 1px solid #76828f;
  border-radius: 3px;
  display: flex;
  align-items: center;
  gap: 6px;
  padding-left: 3px;
  color: #eeeeee;
}

.lv1-sel .selected { width: 158px; }
.fs2-sel .selected { width: 208px; padding-left: 4px; gap: 5px; }

/* filesystem */
.fs-dock {
  height: 477px;
  flex: none;
  display: flex;
  flex-direction: column;
}

.fs-path {
  height: 39px;
  flex: none;
  display: flex;
  align-items: center;
  padding-left: 6px;
  gap: 4px;
}

.fs-input {
  width: 194px;
  margin-left: -2px;
}

.white-box {
  width: 16px;
  height: 16px;
  background: #e0e0e0;
  margin-left: 2px;
}

.fs-filter {
  height: 29px;
  flex: none;
  display: flex;
  align-items: center;
  padding-left: 4px;
  gap: 6px;
  margin-bottom: 4px;
}

.fs-input-wide {
  width: 234px;
}

.tex {
  width: 16px;
  height: 16px;
  flex: none;
  background-size: 3px 3px;
}

.tex-co {
  background-color: #6f7880;
  background-image: linear-gradient(45deg, #858d95 25%, transparent 25% 75%, #5c646c 75%);
}

.tex-nr {
  background-color: #7272f2;
  background-image: linear-gradient(45deg, #8f80ff 25%, transparent 25% 75%, #5c88e8 75%);
}

.tex-rg {
  background-color: #f76cf2;
  background-image: linear-gradient(45deg, #ff88f6 25%, transparent 25% 75%, #ee5cee 75%);
}

.fs-scroll {
  position: absolute;
  right: 3px;
  top: 4px;
  bottom: 4px;
  width: 5px;
  border-radius: 3px;
  background: #2c323c;
}

.fs-scroll::after {
  content: "";
  position: absolute;
  left: 0;
  right: 0;
  top: 10px;
  height: 153px;
  border-radius: 3px;
  background: #6a6f76;
}

/* editor view */
.view-panel {
  flex: 1;
  display: flex;
  flex-direction: column;
}

.toolbar {
  height: 38px;
  flex: none;
  display: flex;
  align-items: center;
  padding-left: 2px;
}

.tb {
  width: 32px;
  height: 38px;
  display: flex;
  align-items: center;
  justify-content: center;
  border: 2px solid transparent;
  border-width: 4px 2px;
  border-radius: 5px;
  background-clip: padding-box;
}

.tb.on {
  background-color: #1e2229;
}

.sep {
  width: 8px;
  height: 30px;
  background: linear-gradient(#4a515e, #4a515e) center / 1px 100% no-repeat;
}

.tb-view {
  width: 47px;
  padding-left: 8px;
  color: #c8cacd;
}

.cam {
  color: #5c6a9a;
}

.tb-group {
  width: 80px;
  height: 36px;
  margin-left: -2px;
  margin-top: 2px;
  background: #414856;
  border-bottom: 2px solid #70bbff;
  display: flex;
  align-items: center;
  padding-left: 10px;
  gap: 3px;
}

.tb-group .small {
  color: #a0a4aa;
}

.tb-group .ic:last-child {
  margin-left: 6px;
}

.viewport {
  flex: 1;
  border: 2px solid #4779a8;
  display: grid;
  grid-template-columns: 13px 1fr;
  grid-template-rows: 13px 1fr;
  min-height: 0;
}

.ruler-corner {
  background: #8d8d8d;
}

.ruler-top, .ruler-left {
  background-color: #1e2229;
  background-repeat: repeat-x;
  position: relative;
  overflow: hidden;
}

.ruler-top {
  background-image:
    linear-gradient(90deg, #8a8e93 1px, transparent 1px),
    linear-gradient(90deg, #8a8e93 1px, transparent 1px),
    linear-gradient(90deg, #8a8e93 1px, transparent 1px);
  background-size: 281.2px 13px, 140.6px 10px, 28.12px 4px;
  background-position: 58px bottom, 58px bottom, 58px bottom;
}

.ruler-left {
  background-repeat: repeat-y;
  background-image:
    linear-gradient(#8a8e93 1px, transparent 1px),
    linear-gradient(#8a8e93 1px, transparent 1px),
    linear-gradient(#8a8e93 1px, transparent 1px);
  background-size: 13px 281.2px, 10px 140.6px, 4px 28.12px;
  background-position: right 120px, right 120px, right 120px;
}

.rlabel {
  position: absolute;
  font-size: 9px;
  line-height: 10px;
  top: 1px;
  color: #a2a5a9;
}

.rl-a { left: 61px; }
.rl-b { left: 341px; }
.rl-c { left: 622px; }
.rl-d { left: 902px; }

.rv {
  left: 2px;
  top: auto;
  transform: rotate(-90deg);
  transform-origin: left top;
}

.rv-a { top: 120px; }
.rv-b { top: 398px; }

.canvas {
  background: #4d4d4d;
  position: relative;
  overflow: hidden;
}

.canvas-art {
  position: absolute;
  left: 0;
  top: 0;
  width: 1087px;
  height: 618px;
}

.game-title {
  font-family: "DejaVu Sans", sans-serif;
  font-weight: 700;
  font-size: 30px;
  fill: #ffffff;
  stroke: #ffffff;
  stroke-width: .8;
}

.play-text {
  font-family: "DejaVu Sans", sans-serif;
  font-weight: 700;
  font-size: 9px;
  fill: #ff20ff;
}

.handles circle {
  fill: #ff6060;
  stroke: #f4e8e8;
  stroke-width: 1;
}

.origin path, .origin circle {
  fill: #8eef97;
}

.zoom-ctl {
  position: absolute;
  left: 11px;
  top: 10px;
  display: flex;
  align-items: center;
  color: #e8e8e8;
}

.zoom-out {
  margin: 0 12px 0 16px;
}

.zoom-ctl span {
  width: 56px;
}

.vscroll {
  position: absolute;
  right: 2px;
  top: 4px;
  bottom: 12px;
  width: 5px;
  border-radius: 3px;
  background: #5a5a5a;
}

.vscroll::after {
  content: "";
  position: absolute;
  left: 0;
  top: 160px;
  width: 5px;
  height: 250px;
  border-radius: 3px;
  background: #8e8e8e;
}

.hscroll {
  position: absolute;
  left: 2px;
  right: 12px;
  bottom: 3px;
  height: 5px;
  border-radius: 3px;
  background: #5e5e5e;
}

.hscroll::after {
  content: "";
  position: absolute;
  left: 218px;
  top: 0;
  width: 436px;
  height: 5px;
  border-radius: 3px;
  background: #d2d2d2;
}

/* bottom panel */
.bottom {
  height: 252px;
  flex: none;
  display: flex;
  flex-direction: column;
}

.bottom-main {
  height: 214px;
  flex: none;
  display: flex;
  gap: 4px;
  padding: 6px 4px 0;
}

.log-col {
  flex: 1;
  display: flex;
  flex-direction: column;
  gap: 5px;
}

.log {
  margin: 0;
  height: 175px;
  flex: none;
  background: #21262e;
  border-radius: 3px;
  padding: 5px 4px;
  font-family: "DejaVu Sans Mono", monospace;
  font-size: 13px;
  line-height: 16px;
  letter-spacing: -.03px;
  color: #d6d8da;
}

.log-dim {
  color: #8d9197;
}

.log-filter {
  height: 28px;
  flex: none;
}

.side {
  width: 60px;
  flex: none;
  display: flex;
  flex-direction: column;
}

.side-row {
  height: 26px;
  flex: none;
  display: flex;
  align-items: center;
  justify-content: space-between;
  padding-left: 6px;
  padding-right: 6px;
}

.side-row:nth-child(3) {
  padding-right: 0;
}

.side-on {
  width: 28px;
  height: 26px;
  border-radius: 3px;
  background: #1e2229;
  display: flex;
  align-items: center;
  justify-content: center;
}

.side-sep {
  height: 1px;
  flex: none;
  margin: 5px 0 6px;
  background: #4d5563;
}

.count {
  height: 30px;
  flex: none;
  background: #262b34;
  border-bottom: 2px solid #70bbff;
  border-radius: 3px;
  margin-bottom: 4px;
  display: flex;
  align-items: center;
  padding-left: 6px;
  gap: 13px;
  color: #70a8e0;
}

.count:last-child {
  margin-bottom: 0;
}

.bottom-tabs {
  flex: 1;
  display: flex;
  align-items: center;
  padding-left: 10px;
  padding-right: 10px;
  gap: 16.500px;
  color: #b8babd;
}

.btab-on {
  color: #5da6e6;
}

.btab-warn {
  color: #ffd965;
  display: flex;
  align-items: center;
  gap: 4px;
}

.dot {
  width: 8px;
  height: 8px;
  border-radius: 50%;
  background: #ffd965;
}

.version {
  margin-left: auto;
  display: flex;
  align-items: center;
  color: #868a90;
  gap: 10px;
}

.version .ic:last-child {
  margin-left: 6px;
}

/* inspector */
.insp-tools {
  height: 36px;
  display: flex;
  align-items: center;
  padding: 0 2px;
  flex: none;
}

.insp-line {
  height: 30px;
  flex: none;
  display: flex;
  align-items: center;
  padding: 0 2px 0 4px;
}

.insp-filter {
  margin-top: 4px;
  height: 29px;
  margin-bottom: 4px;
}

.obj-select {
  flex: 1;
  height: 30px;
  border-bottom: 0;
  border-radius: 3px;
  gap: 6px;
  padding-left: 8px;
}

.obj-select .bright {
  margin-right: auto;
}

.prop-filter {
  flex: 1;
}

.insp-tree {
  flex: 1;
  margin: 0 4px 4px;
  background: #21262e;
  border-radius: 3px;
  overflow: hidden;
  padding: 0 16px 0 4px;
  position: relative;
}

.sec {
  height: 24px;
  background: #2a303a;
  display: flex;
  align-items: center;
  font-weight: 700;
  color: #d4d6d9;
  padding-left: 2px;
  padding-bottom: 2px;
}

.sec-first {
  margin-top: -8px;
}

.arrow-sm {
  width: 13px;
  height: 13px;
  color: #8d9197;
  margin-right: -1px;
  margin-bottom: -3px;
}

.sub {
  margin-left: 12px;
  padding-left: 2px;
}

.sec-const {
  margin-bottom: 4px;
}

label {
  color: #a4a7ab;
}

.prop {
  height: 28px;
  margin-bottom: 4px;
  display: flex;
  align-items: center;
  padding-left: 20px;
}

.prop:nth-child(3) {
  margin-bottom: 0;
}

.prop label {
  width: 192px;
  margin-top: -3px;
}

.val {
  flex: 1;
  height: 100%;
  background: #1e2229;
  display: flex;
  align-items: center;
  padding-left: 5px;
  gap: 9px;
  border-radius: 3px;
}

.cb {
  width: 14px;
  height: 14px;
  flex: none;
  border-radius: 3px;
  background: #70bbff;
  display: block;
}

.cb svg {
  display: block;
  width: 14px;
  height: 14px;
}

.cb path {
  fill: none;
  stroke: #ffffff;
  stroke-width: 2;
}

.cb.off {
  background: #4a505b;
}

.on-text {
  color: #5da6e6;
}

.prop-theme {
  height: 30px;
}

.prop-type {
  height: 30px;
  margin-bottom: 0;
}

.val-plain {
  background: none;
  justify-content: space-between;
  padding: 0 6px 0 59px;
}

.empty {
  color: #b8babd;
}

.val-type {
  justify-content: flex-end;
  padding-right: 7px;
  gap: 14px;
}

.cprop {
  height: 28px;
  margin-bottom: 4px;
  padding-left: 33px;
  display: flex;
  align-items: center;
  position: relative;
}

.cprop label {
  margin-left: 9px;
  margin-top: -3px;
  white-space: nowrap;
}

.revert {
  position: absolute;
  left: 199px;
  top: 6px;
}

.cval {
  position: absolute;
  right: 0;
  top: 0;
  bottom: 0;
  width: 193px;
  padding: 5px 6px 5px 5px;
  background: #1e2229;
  border-radius: 3px;
}

.swatch {
  display: block;
  height: 18px;
  background: #000000;
}

.magenta { background: #ff20ff; }
.yellow { background: #ffff00; }

.font-row {
  height: 62px;
  display: flex;
  margin-left: 24px;
}

.font-key {
  width: 194px;
  background: #456f96;
  display: flex;
  align-items: center;
  padding: 0 0 0 9px;
  position: relative;
}

.font-key label {
  color: #e8eaec;
  margin-left: 9px;
}

.font-key .revert {
  left: 175px;
  top: 23px;
}

.font-val {
  flex: 1;
  display: flex;
  align-items: flex-start;
  position: relative;
  padding: 0 6px;
  background: #1e2229;
}

.font-val > .ic:first-child {
  margin-top: 23px;
}

.font-val > .ic:last-child {
  margin-left: auto;
  margin-top: 24px;
}

.preview {
  width: 62px;
  height: 62px;
  margin-left: 42px;
  background: #4d4d4d;
  border-radius: 3px 3px 0 0;
  overflow: hidden;
  color: #ffffff;
  font-family: "DejaVu Sans", sans-serif;
  font-weight: 700;
  font-size: 24px;
  line-height: 62px;
  letter-spacing: -2px;
  text-align: center;
}

.insp-scroll {
  position: absolute;
  right: 4px;
  top: 0;
  bottom: 0;
  width: 4px;
  border-radius: 2px;
  background: #2c323c;
}

.insp-scroll i {
  position: absolute;
  left: 0;
  top: 381px;
  width: 5px;
  height: 259px;
  border-radius: 3px;
  background: #6a6f76;
}
```
